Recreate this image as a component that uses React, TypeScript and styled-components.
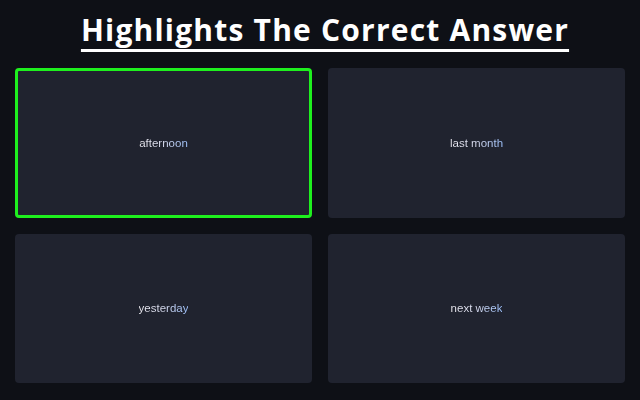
import React from "react";
import styled, { createGlobalStyle } from "styled-components";

const GlobalStyle = createGlobalStyle`
  html, body {
    margin: 0;
    padding: 0;
    background: #0e1016;
  }
  #root {
    width: 640px;
    height: 400px;
  }
`;

const answers = [
  { text: "afternoon", correct: true },
  { text: "last month", correct: false },
  { text: "yesterday", correct: false },
  { text: "next week", correct: false },
];

const App = () => {
  return (
    <>
      <GlobalStyle />
      <Page>
        <Title>Highlights The Correct Answer</Title>
        <Grid>
          {answers.map((a) => (
            <Card key={a.text} correct={a.correct}>
              <Label>{a.text}</Label>
            </Card>
          ))}
        </Grid>
      </Page>
    </>
  );
};

const Page = styled.div`
  width: 640px;
  height: 400px;
  box-sizing: border-box;
  padding: 10px 15px 17px 15px;
  display: flex;
  flex-direction: column;
  background: #0e1016;
`;

const Title = styled.h1`
  margin: 0;
  padding-left: 10px;
  text-align: center;
  font-family: "Open Sans", "DejaVu Sans", sans-serif;
  font-weight: 700;
  font-size: 30px;
  letter-spacing: 1.2px;
  line-height: 40px;
  color: #ffffff;
  text-decoration: underline;
  text-decoration-thickness: 3px;
  text-underline-offset: 8px;
  text-decoration-skip-ink: none;
`;

const Grid = styled.div`
  margin-top: 18px;
  flex: 1;
  display: grid;
  grid-template-columns: 1fr 1fr;
  grid-template-rows: 1fr 1fr;
  gap: 16px;
`;

const Card = styled.div<{ correct: boolean }>`
  background: #20232f;
  border-radius: 4px;
  box-sizing: border-box;
  border: 3px solid ${({ correct }) => (correct ? "#1ef01e" : "transparent")};
  display: flex;
  align-items: center;
  justify-content: center;
`;

const Label = styled.span`
  font-family: "Liberation Sans", Arial, sans-serif;
  font-size: 11.5px;
  background: linear-gradient(90deg, #f0eef4 0%, #d8dcf0 50%, #9fc3ff 100%);
  -webkit-background-clip: text;
  background-clip: text;
  color: transparent;
`;

export default App;
